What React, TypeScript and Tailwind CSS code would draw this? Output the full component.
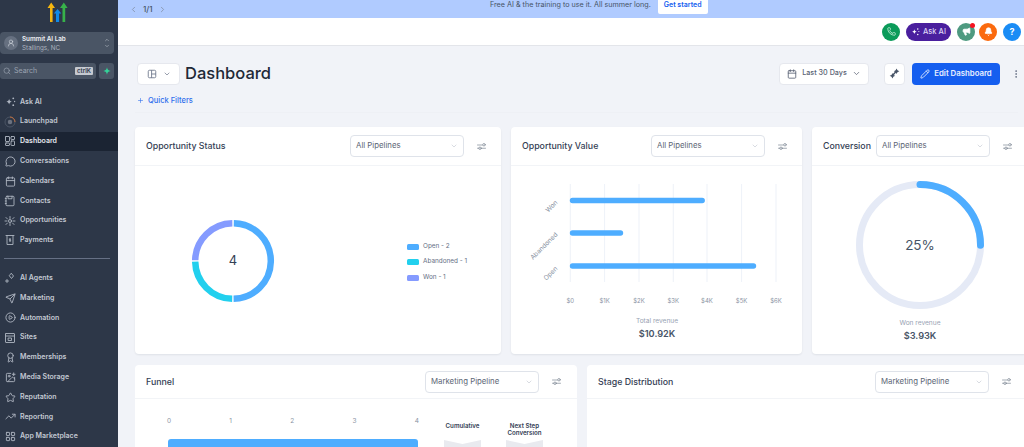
import React from "react";
import {
  MessageCircle, Calendar, Award, Star, TrendingUp, LayoutGrid, Send, CirclePlay,
  ChevronDown, ChevronUp, ChevronLeft, ChevronRight, Search, Plus, Phone, Megaphone, Bell, Pencil,
  EllipsisVertical, UserRound, ImagePlus,
} from "lucide-react";

const ic = "w-[11px] h-[11px] shrink-0";

function Svg({ children }: { children: React.ReactNode }) {
  return (
    <svg viewBox="0 0 24 24" fill="none" stroke="currentColor" strokeWidth="1.8" strokeLinecap="round" strokeLinejoin="round" className="w-[12px] h-[12px] shrink-0">
      {children}
    </svg>
  );
}

function AskIcon({ className = "w-[11px] h-[11px] shrink-0" }: { className?: string }) {
  return (
    <svg viewBox="0 0 24 24" fill="currentColor" className={className}>
      <path d="M9 6c.8 4 2.2 5.6 6 6.4-3.8.8-5.2 2.4-6 6.4-.8-4-2.2-5.600-6-6.400 3.800-.8 5.200-2.400 6-6.400z" />
      <circle cx="18" cy="5" r="2" />
      <circle cx="21" cy="12" r="1.400" />
      <circle cx="18" cy="20" r="2" />
    </svg>
  );
}

const LaunchIcon = () => (
  <svg viewBox="0 0 24 24" fill="none" className="w-[12px] h-[12px] shrink-0">
    <circle cx="12" cy="12" r="10" stroke="#4b5565" strokeWidth="2" />
    <path d="M12 2a10 10 0 0 1 10 10" stroke="#c2703d" strokeWidth="2" />
    <circle cx="12" cy="12" r="4.5" fill="#6b7280" />
  </svg>
);
const DashIcon = () => (
  <Svg><rect x="3" y="3" width="8" height="10" rx="1" /><rect x="14" y="3" width="7" height="6" rx="1" /><rect x="14" y="12" width="7" height="9" rx="1" /><rect x="3" y="16" width="8" height="5" rx="1" /></Svg>
);
const ContactIcon = () => (
  <Svg><rect x="4" y="2.500" width="16" height="19" rx="2" /><path d="M8 2.500v5h8v-5M2.500 7h2M2.500 12h2M2.500 17h2" /></Svg>
);
const OppIcon = () => (
  <Svg><circle cx="12" cy="12" r="3" /><path d="M4 5l3 3M20 5l-3 3M4 19l3-3M20 19l-3-3M2 12h4M18 12h4M12 3v4M12 17v4" /></Svg>
);
const PayIcon = () => (
  <Svg><path d="M4 3h16M6 3v18h12V3" /><path d="M12 9v6M10.500 10.500h2.500M11 13.500h2.500" /></Svg>
);
const AgentIcon = () => (
  <Svg><path d="M15 3l4 5-4 5-4-5z" /><path d="M6 15v6M3 18h6" /></Svg>
);
const SitesIcon = () => (
  <Svg><rect x="3" y="3" width="18" height="18" rx="1" /><path d="M3 8h18" /><rect x="9" y="12" width="6" height="5" /></Svg>
);

const top = [
  ["Ask AI", <AskIcon />],
  ["Launchpad", <LaunchIcon />],
  ["Dashboard", <DashIcon />],
  ["Conversations", <MessageCircle className={ic} />],
  ["Calendars", <Calendar className={ic} />],
  ["Contacts", <ContactIcon />],
  ["Opportunities", <OppIcon />],
  ["Payments", <PayIcon />],
] as const;
const bottom = [
  ["AI Agents", <AgentIcon />],
  ["Marketing", <Send className={ic} />],
  ["Automation", <CirclePlay className={ic} />],
  ["Sites", <SitesIcon />],
  ["Memberships", <Award className={ic} />],
  ["Media Storage", <ImagePlus className={ic} />],
  ["Reputation", <Star className={ic} />],
  ["Reporting", <TrendingUp className={ic} />],
  ["App Marketplace", <LayoutGrid className={ic} />],
] as const;

function NavItem({ label, icon }: { label: string; icon: React.ReactNode }) {
  const active = label === "Dashboard";
  return (
    <div className={`h-[19.8px] flex items-center gap-[4px] pl-[4px] text-[7px] font-semibold ${active ? "bg-[#1b2433] text-[#e5e8ee]" : "text-[#c3c9d3]"}`}>
      <span className="w-[12px] flex justify-center text-[#aeb5c1]">{icon}</span>
      {label}
    </div>
  );
}

function Sidebar() {
  return (
    <aside className="w-[118px] shrink-0 h-[447px] bg-[#2d3748] overflow-hidden">
      <div className="h-[32px] pt-[2px] flex justify-center pr-[2px]">
        <svg viewBox="0 0 22 20" className="w-[22px] h-[20px]">
          <path d="M3 20V6H0.500L4.200 0.500 8 6H5.600v14z" fill="#f5b60f" />
          <path d="M9 20V11.500H6.800L10.600 7l3.700 4.500h-2.200V20z" fill="#1089e8" />
          <path d="M15.500 20V6H13L16.800 0.500 20.600 6H18.200v14z" fill="#37b24a" />
        </svg>
      </div>
      <div className="w-[114px] h-[22px] rounded-[4px] bg-[#4a5565] flex items-center pl-[4px] pr-[3px] gap-[4px]">
        <span className="w-[14px] h-[14px] rounded-full bg-[#667080] flex items-center justify-center text-[#cfd4dc]">
          <UserRound className="w-[8px] h-[8px]" />
        </span>
        <div className="flex-1 leading-[9px] pt-[1px]">
          <div className="text-[6.3px] font-semibold text-[#eef0f4]">Summit AI Lab</div>
          <div className="text-[6.3px] text-[#aab2bf]">Stallings, NC</div>
        </div>
        <div className="flex flex-col text-[#c5cad3]">
          <ChevronUp className="w-[8px] h-[6px]" />
          <ChevronDown className="w-[8px] h-[6px]" />
        </div>
      </div>
      <div className="mt-[9px] flex gap-[3px] w-[114px]">
        <div className="w-[96px] h-[16px] rounded-[3px] bg-[#4a5565] flex items-center pl-[3px] pr-[3px] gap-[3px] text-[#9aa3b1]">
          <Search className="w-[8px] h-[8px]" />
          <span className="text-[7px] flex-1">Search</span>
          <span className="bg-[#c5c9d0] text-[#2d3748] text-[6px] font-semibold px-[2px] rounded-[1px] leading-[8px]">ctrlK</span>
        </div>
        <div className="w-[15px] h-[16px] rounded-[3px] bg-[#4a5565] flex items-center justify-center">
          <svg viewBox="0 0 24 24" className="w-[8px] h-[8px]" fill="#34d399">
            <path d="M12 1c1.200 7 3.500 9.800 11 11-7.500 1.200-9.800 4-11 11-1.200-7-3.500-9.800-11-11 7.500-1.200 9.800-4 11-11z" />
          </svg>
        </div>
      </div>
      <div className="mt-[13px]">
        {top.map(([l, i]) => <NavItem key={l} label={l} icon={i} />)}
      </div>
      <div className="mx-[4px] mt-[8px] mb-[9px] h-px w-[106px] bg-[#667085]" />
      <div>
        {bottom.map(([l, i]) => <NavItem key={l} label={l} icon={i} />)}
      </div>
    </aside>
  );
}

function Select({ label }: { label: string }) {
  return (
    <div className="w-[114px] h-[22px] shrink-0 rounded-[4px] border border-[#dfe3ea] bg-white flex items-center justify-between pl-[5px] pr-[5px] text-[7.8px] text-[#5d6675]">
      {label}
      <ChevronDown className="w-[8px] h-[8px] text-[#c5cad3]" />
    </div>
  );
}

function Sliders() {
  return (
    <svg viewBox="0 0 18 14" fill="none" stroke="#7d8694" strokeWidth="1.400" strokeLinecap="round" className="w-[9px] h-[7px] shrink-0">
      <path d="M1 4h10M1 10.500h3M8.500 10.500H17" />
      <circle cx="14" cy="3.500" r="2.500" />
      <circle cx="6" cy="10.500" r="2.500" />
    </svg>
  );
}

function CardHead({ title, select, h = "h-[39px]", end = "w-[2px]" }: { title: string; select: string; h?: string; end?: string }) {
  return (
    <div className={`${h} border-b border-[#f2f4f7] flex items-center pl-[11px] gap-[13px]`}>
      <div className="flex-1 min-w-0 whitespace-nowrap text-[8.8px] font-medium text-[#344054]">{title}</div>
      <Select label={select} />
      <Sliders />
      <div className={end} />
    </div>
  );
}

function Donut() {
  const r = 37.8;
  const c = 2 * Math.PI * r;
  const seg = (start: number, frac: number, color: string) => (
    <circle cx="50" cy="50" r={r} fill="none" stroke={color} strokeWidth="6.500"
      strokeDasharray={`${frac * c - 1.6} ${c}`} transform={`rotate(${start + 1.2 - 90} 50 50)`} />
  );
  return (
    <div className="relative w-[100px] h-[100px] mt-[2px]">
      <svg viewBox="0 0 100 100" className="w-[100px] h-[100px]">
        {seg(0, 0.5, "#4eadff")}
        {seg(180, 0.25, "#22d0ee")}
        {seg(270, 0.25, "#859bff")}
      </svg>
      <div className="absolute inset-0 flex items-center justify-center text-[13px] text-[#344054]">4</div>
    </div>
  );
}

function Legend({ color, label }: { color: string; label: string }) {
  return (
    <div className="flex items-center gap-[4px] h-[15.5px] text-[6.4px] text-[#667085]">
      <span className={`w-[12px] h-[6px] rounded-[1.500px] ${color}`} />
      {label}
    </div>
  );
}

function BarChart() {
  const xs = [570.3, 604.6, 639, 673.3, 707, 741.6, 776];
  const labels = ["$0", "$1K", "$2K", "$3K", "$4K", "$5K", "$6K"];
  return (
    <svg viewBox="511 167 291 145" className="w-[291px] h-[145px] block">
      {xs.map((x) => <line key={x} x1={x} x2={x} y1="185" y2="283" stroke="#e8edf6" strokeWidth="0.8" />)}
      {[[201.5, 704.7], [234, 623], [267, 756]].map(([y, x]) => (
        <line key={y} x1="572.500" x2={x - 2.5} y1={y} y2={y} stroke="#4eadff" strokeWidth="5.400" strokeLinecap="round" />
      ))}
      {[["Won", 558, 204], ["Abandoned", 558, 236], ["Open", 558, 270]].map(([t, x, y]) => (
        <text key={t as string} x={x} y={y} textAnchor="end" fontSize="6.500" fill="#8a93a3" transform={`rotate(-45 ${x} ${y})`}>{t}</text>
      ))}
      {xs.map((x, i) => <text key={x} x={x} y="304" textAnchor="middle" fontSize="6" fill="#8a93a3">{labels[i]}</text>)}
    </svg>
  );
}

function Gauge() {
  const r = 60.5;
  const c = 2 * Math.PI * r;
  return (
    <div className="relative w-[128px] h-[128px]">
      <svg viewBox="0 0 128 128" className="w-[128px] h-[128px]">
        <circle cx="64" cy="64" r={r} fill="none" stroke="#e5eaf6" strokeWidth="7" />
        <circle cx="64" cy="64" r={r} fill="none" stroke="#4eadff" strokeWidth="7" strokeLinecap="round"
          strokeDasharray={`${c / 4} ${c}`} transform="rotate(-90 64 64)" />
      </svg>
      <div className="absolute inset-0 flex items-center justify-center text-[13.500px] text-[#475467]">25%</div>
    </div>
  );
}

function Stat({ label, value }: { label: string; value: string }) {
  return (
    <div className="flex flex-col items-center">
      <div className="text-[6.600px] leading-[10px] text-[#98a2b3]">{label}</div>
      <div className="text-[9.200px] leading-[14px] mt-[1px] font-semibold text-[#475467]">{value}</div>
    </div>
  );
}

function FunnelCol({ title }: { title: React.ReactNode }) {
  return (
    <div className="w-[37px] flex flex-col items-center">
      <div className="h-[23px] pt-[6px] text-center text-[6.200px] leading-[6.600px] font-semibold text-[#344054] whitespace-nowrap">{title}</div>
      <svg viewBox="0 0 37 20" preserveAspectRatio="none" className="w-[37px] h-[20px]">
        <path d="M0 0l18.500 4L37 0v20H0z" fill="#e9eaef" />
      </svg>
    </div>
  );
}

export default function App() {
  return (
    <div className="w-[1024px] h-[447px] overflow-hidden flex font-['Inter',sans-serif] bg-[#f1f3f8]">
      <Sidebar />
      <main className="w-[906px] h-[447px] overflow-hidden">
        <div className="h-[18px] bg-[#b0cbff] flex items-center relative">
          <div className="pl-[11px] flex items-center gap-[5px] text-[8px] text-[#475467]">
            <ChevronLeft className="w-[9px] h-[9px] text-[#7f8ba0]" />
            <span className="font-medium">1/1</span>
            <ChevronRight className="w-[9px] h-[9px] text-[#7f8ba0]" />
          </div>
          <div className="absolute left-[372px] top-0 flex items-start gap-[7px] text-[7.200px] text-[#475467]">
            <span className="leading-[9px]">Free AI &amp; the training to use it. All summer long.</span>
            <span className="bg-white text-[#155eef] text-[7px] font-semibold h-[14px] leading-[9px] px-[6px] rounded-b-[2px]">Get started</span>
          </div>
        </div>
        <header className="h-[28px] bg-white border-b border-[#e3e5ea] flex items-center justify-end gap-[4px] pr-[3px]">
          <span className="w-[18px] h-[18px] rounded-full bg-[#0b9b5a] flex items-center justify-center mr-[2px]"><Phone className="w-[9px] h-[9px] text-[#d7f5e6]" /></span>
          <span className="w-[45px] h-[18px] rounded-full bg-[#4a1f9e] flex items-center justify-center gap-[3px] text-[7.500px] text-[#dcd4f5] font-medium mr-[2px]"><AskIcon className="w-[9px] h-[9px] text-white" />Ask AI</span>
          <span className="relative w-[18px] h-[18px] rounded-full bg-[#4e9a80] flex items-center justify-center">
            <Megaphone className="w-[9px] h-[9px] text-white fill-white" />
            <span className="absolute right-[0px] top-0 w-[5px] h-[5px] rounded-full bg-[#f5121f]" />
          </span>
          <span className="w-[18px] h-[18px] rounded-full bg-[#fb6a0e] flex items-center justify-center"><Bell className="w-[9px] h-[9px] text-white fill-white" /></span>
          <span className="w-[18px] h-[18px] rounded-full bg-[#1a8cf5] flex items-center justify-center text-white text-[9px] font-bold ml-[2px]">?</span>
        </header>

        <div className="pl-[17px]">
          <div className="pl-[2px] pt-[16px] flex items-center h-[39px]">
            <div className="w-[43px] h-[22px] rounded-[4px] bg-white border border-[#e6e8ee] flex items-center justify-center gap-[6px] text-[#667085]">
              <svg viewBox="0 0 24 24" fill="none" stroke="currentColor" strokeWidth="2" className="w-[10px] h-[10px]">
                <rect x="3" y="3" width="18" height="18" rx="3" />
                <path d="M11 3v18M11 12h10" />
              </svg>
              <ChevronDown className="w-[8px] h-[8px]" />
            </div>
            <h1 className="ml-[5px] text-[16.500px] font-medium text-[#1f2937]">Dashboard</h1>
            <div className="ml-auto w-[90px] h-[22px] rounded-[4px] bg-white border border-[#e6e8ee] flex items-center justify-center gap-[5px] text-[7.200px] font-medium text-[#596273]">
              <Calendar className="w-[10px] h-[10px]" />Last 30 Days<ChevronDown className="w-[9px] h-[9px]" />
            </div>
            <div className="ml-[15px] w-[21px] h-[22px] rounded-[4px] bg-white border border-[#e6e8ee] flex items-center justify-center text-[#475467]">
              <svg viewBox="0 0 24 24" fill="currentColor" className="w-[11px] h-[11px]">
                <path d="M16.500 1l2 4 4 2-4 2-2 4-2-4-4-2 4-2zM7.500 11l2 4 4 2-4 2-2 4-2-4-4-2 4-2z" />
                <path d="M7 17l9-10" stroke="currentColor" strokeWidth="3" />
              </svg>
            </div>
            <div className="ml-[7px] w-[88px] h-[22px] rounded-[4px] bg-[#155eef] flex items-center justify-center gap-[4px] text-[7.800px] font-semibold text-[#e8efff]">
              <Pencil className="w-[10px] h-[10px]" />Edit Dashboard
            </div>
            <EllipsisVertical className="ml-[11px] mr-[3px] w-[10px] h-[10px] text-[#667085]" />
          </div>
          <div className="h-[28px] pt-[4px] pl-[2px] flex items-center gap-[3px] text-[7.500px] font-medium text-[#2f6fed] border-b border-[#eef0f5] mr-[6px]">
            <Plus className="w-[7px] h-[7px]" />
            <span className="ml-[1px]">Quick Filters</span>
          </div>

          <div className="mt-[14px] flex gap-[10px] w-[1000px]">
            <section className="w-[366px] h-[227px] shrink-0 bg-white rounded-[4px] shadow-[0_1px_2px_rgba(16,24,40,0.08)]">
              <CardHead title="Opportunity Status" select="All Pipelines" />
              <div className="h-[188px] flex items-center pl-[48px]">
                <Donut />
                <div className="ml-[124px] mt-[4px]">
                  <Legend color="bg-[#4eadff]" label="Open - 2" />
                  <Legend color="bg-[#22d0ee]" label="Abandoned - 1" />
                  <Legend color="bg-[#859bff]" label="Won - 1" />
                </div>
              </div>
            </section>
            <section className="w-[291px] h-[227px] shrink-0 bg-white rounded-[4px] shadow-[0_1px_2px_rgba(16,24,40,0.08)]">
              <CardHead title="Opportunity Value" select="All Pipelines" />
              <BarChart />
              <div className="pt-[5px] pl-[1px]"><Stat label="Total revenue" value="$10.92K" /></div>
            </section>
            <section className="w-[215px] h-[227px] shrink-0 bg-white rounded-[4px] shadow-[0_1px_2px_rgba(16,24,40,0.08)]">
              <CardHead title="Conversion" select="All Pipelines" />
              <div className="w-[216px] flex flex-col items-center">
                <div className="pt-[15px]"><Gauge /></div>
                <div className="mt-[9px]"><Stat label="Won revenue" value="$3.93K" /></div>
              </div>
            </section>
          </div>

          <div className="mt-[11px] flex gap-[10px] w-[1000px]">
            <section className="w-[442px] h-[120px] shrink-0 bg-white rounded-[4px]">
              <CardHead title="Funnel" select="Marketing Pipeline" h="h-[34px]" end="w-[3px]" />
              <div className="flex pl-[33px] pt-[18px]">
                <div className="w-[252px]">
                  <div className="flex justify-between text-[6.500px] text-[#8a93a3] leading-[9px] w-[252px] -ml-[1px]">
                    <span>0</span><span>1</span><span>2</span><span>3</span><span>4</span>
                  </div>
                  <div className="mt-[13px] h-[20px] w-[250px] bg-[#4eadff] rounded-t-[3px]" />
                </div>
                <div className="ml-[24px] flex gap-[25px]">
                  <FunnelCol title="Cumulative" />
                  <FunnelCol title={<span>Next Step<br />Conversion</span>} />
                </div>
              </div>
            </section>
            <section className="w-[450px] h-[120px] shrink-0 bg-white rounded-[4px]">
              <div className="h-[34px] border-b border-[#f2f4f7] flex items-center pl-[11px] gap-[13px]">
                <div className="w-[264px] text-[8.800px] font-medium text-[#344054]">Stage Distribution</div>
                <Select label="Marketing Pipeline" />
                <Sliders />
              </div>
            </section>
          </div>
        </div>
      </main>
    </div>
  );
}
